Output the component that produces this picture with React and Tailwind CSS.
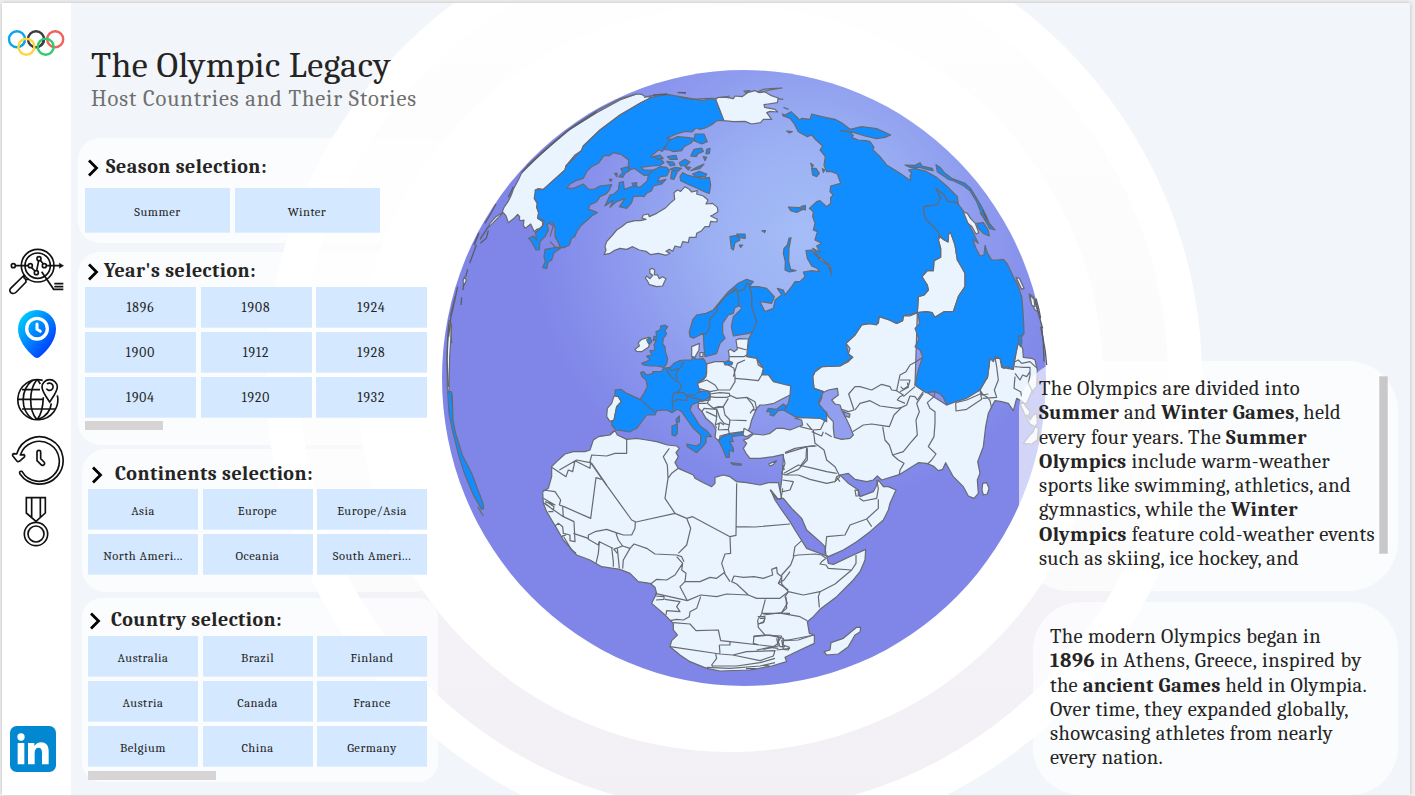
import { useLayoutEffect, useRef } from "react";

/* Text set to an exact measure by spreading the letters. */
function Fit({ w, className = "", children }) {
  const ref = useRef(null);
  useLayoutEffect(() => {
    const el = ref.current;
    el.style.letterSpacing = "0px";
    const natural = el.getBoundingClientRect().width;
    el.style.letterSpacing = (w - natural) / el.textContent.length + "px";
  }, [w]);
  return (
    <div className={className}>
      <span ref={ref} className="whitespace-nowrap">{children}</span>
    </div>
  );
}

function Rings() {
  return (
    <svg className="absolute inset-0" width="1339" height="792" viewBox="71 3 1339 792">
      <defs>
        <linearGradient id="ringFill" x1="0" y1="0" x2="0" y2="1">
          <stop offset="0.08" stopColor="#fefefe" />
          <stop offset="0.5" stopColor="#fbfbfb" />
          <stop offset="0.64" stopColor="#f8f7f9" />
          <stop offset="0.76" stopColor="#f4f2f6" />
          <stop offset="1" stopColor="#f2f0f4" />
        </linearGradient>
      </defs>
      <circle cx="734" cy="378" r="468" fill="#fff" />
      <circle cx="734" cy="378" r="434" fill="url(#ringFill)" />
      <circle cx="730" cy="379" r="373" fill="#fff" />
    </svg>
  );
}

const LAND = "#e9f4ff";
const HOST = "#118dff";
const SEA = "#929fee";

function Part({ x, y, land = [], host = [], sea = [], lines = [], marks = [] }) {
  return (
    <g transform={`translate(${x} ${y}) scale(0.33333)`}>
      {land.map((d, i) => <path key={"l" + i} d={d} fill={LAND} />)}
      {host.map((d, i) => <path key={"h" + i} d={d} fill={HOST} />)}
      {sea.map((d, i) => <path key={"s" + i} d={d} fill={SEA} />)}
      {lines.map((d, i) => <path key={"n" + i} d={d} fill="none" />)}
      {marks.map((d, i) => <path key={"m" + i} d={d} fill="none" stroke="#5a5d68" strokeWidth="4" />)}
    </g>
  );
}

const northAmerica = {
  x: 440, y: 60,
  land: [
    "M245 338 L262 318 300 285 330 258 390 208 470 158 540 120 590 102 605 103 612 108 635 112 600 130 540 165 480 210 430 258 424 272 405 285 378 318 375 330 330 370 310 388 295 386 286 390 288 402 283 415 292 430 290 442 296 458 293 475 308 485 308 497 298 506 290 508 283 515 278 505 272 492 262 500 255 505 250 495 252 480 244 482 238 480 239 470 233 463 222 475 205 488 198 468 190 458 172 475 160 488 145 502 150 490 168 470 186 458 192 442 204 425 214 405 220 388 235 360Z",
    "M492 584 L498 570 495 560 500 545 515 528 530 510 545 500 560 488 585 482 600 482 618 478 606 474 610 465 625 462 628 470 650 460 675 445 690 430 704 418 702 398 712 390 722 394 735 380 748 388 755 396 772 392 770 402 790 408 804 420 798 432 818 430 832 442 834 455 820 464 812 468 832 478 830 486 812 484 808 500 795 500 785 512 770 520 768 532 748 532 745 548 728 545 722 562 705 558 698 574 688 568 678 574 690 580 678 586 655 580 632 584 618 574 598 570 578 560 560 568 540 565 522 572 510 580Z",
    "M616 655 L620 648 630 656 638 646 630 640 629 628 637 625 644 630 643 645 652 644 658 656 668 650 678 656 672 668 668 678 650 680 628 674 622 662Z",
  ],
  host: [
    "M635 112 L680 103 720 110 750 115 790 122 810 116 827 118 852 182 830 182 815 194 796 204 780 208 768 204 755 216 735 214 710 222 680 235 695 238 690 248 672 262 668 274 655 270 640 283 632 290 650 292 665 300 672 308 660 316 635 318 603 322 612 330 655 330 640 345 612 346 582 325 570 330 565 315 566 300 545 284 520 278 508 287 492 287 475 310 455 320 440 335 430 355 408 362 390 372 380 385 400 385 430 372 445 387 462 388 480 378 515 374 508 390 498 402 480 410 470 425 450 435 445 448 458 452 472 458 455 468 445 478 425 495 410 515 404 530 395 535 388 555 372 563 360 560 355 548 345 530 345 500 335 488 322 492 325 512 315 530 300 545 298 570 288 570 275 545 266 535 280 528 290 540 286 518 298 508 310 495 312 482 293 475 296 458 290 442 292 430 283 415 286 390 310 388 330 370 375 330 378 318 424 272 430 258 480 210 540 165 600 130Z",
    "M315 568 L350 562 362 565 342 578 335 600 325 605 320 626 308 622 316 605 312 590Z",
    "M495 438 L510 405 522 402 535 390 538 368 550 365 553 388 580 378 600 382 622 362 625 345 640 330 660 320 680 322 688 332 680 348 660 350 652 365 678 358 665 372 640 378 635 392 620 400 612 410 600 408 580 410 575 428 560 445 538 440 556 415 530 425 510 442 520 420Z",
    "M670 268 L690 240 712 230 740 232 765 236 752 250 732 260 725 272 700 275 688 270Z",
    "M765 222 L792 222 802 245 785 252 762 242Z",
    "M640 290 L660 285 670 295 655 298Z M682 290 L708 286 712 298 690 298Z M680 304 L700 306 705 315 692 318Z",
    "M752 288 L762 268 785 264 790 274 775 280 768 290Z M800 268 L810 265 808 280 798 282Z M790 290 L800 292 795 302Z",
    "M718 308 L735 298 750 306 740 316 722 318Z M770 322 L792 312 780 325 752 332Z",
    "M692 356 L695 334 708 328 712 335 702 358Z",
    "M720 350 L728 338 742 345 760 350 790 355 808 352 812 375 808 400 795 396 770 384 752 376 742 372 722 362Z M758 342 L778 334 800 342 796 350 768 350Z",
    "M536 350 L548 338 543 326 565 320 568 332 555 340 548 352Z M576 370 L590 368 590 378 580 378Z M524 340 L532 340 530 350Z M508 358 L516 358 512 364Z",
    "M690 328 L705 322 725 325 715 333Z M735 320 L752 322 745 330Z",
  ],
  lines: [
    "M260 318 L330 255 400 198 470 152 540 116 590 102",
    "M612 112 L650 104 690 104 M720 112 L760 118 790 116 M712 98 L738 98 M790 116 L830 114 870 108",
    "M325 488 L340 498 330 530 M345 560 L330 545 M370 563 L340 562",
  ],
  marks: ["M245 338 L300 284 380 214 470 155", "M716 97 L738 99", "M640 105 L682 102", "M168 432 L150 465 135 490", "M220 380 L205 412", "M145 500 L120 538", "M115 522 L102 555"],
};

const northAsia = {
  x: 720, y: 60,
  land: [
    "M-13 118 L-5 112 20 112 40 116 45 108 66 110 85 97 105 92 115 96 135 96 152 106 175 114 172 128 145 132 132 134 134 142 165 148 173 156 150 154 140 158 155 178 130 178 122 188 95 192 75 184 40 185 12 182Z",
    "M660 530 L672 540 684 546 686 520 692 518 700 540 705 555 712 600 728 622 735 640 735 680 715 710 700 755 672 755 645 772 636 758 620 755 592 758 595 710 612 705 625 690 622 675 612 662 606 650 622 632 640 632 642 602 662 592 662 565 655 540Z",
    "M888 652 L898 655 912 685 905 688Z M930 705 L942 718 945 740 935 735Z",
  ],
  host: [
    "M187 162 L195 165 213 155 232 172 238 180 246 175 270 178 275 162 305 170 345 178 365 188 390 208 425 200 470 206 512 225 495 232 470 236 435 228 400 217 360 212 385 215 400 226 395 232 415 240 440 242 450 245 462 262 458 268 480 290 500 315 538 338 572 362 570 348 575 340 566 330 585 325 620 335 650 352 680 378 700 398 712 410 715 432 700 425 684 425 672 405 648 385 662 415 650 435 612 440 611 460 620 480 640 492 660 520 655 540 662 565 662 592 642 602 640 632 622 632 606 650 622 675 625 690 612 705 595 710 592 758 570 764 550 767 548 782 530 790 508 780 478 770 470 795 445 790 425 795 405 825 378 850 385 882 398 892 360 918 305 920 285 935 278 950 282 985 310 995 295 1030 320 1060 320 1085 300 1075 240 1073 225 1070 190 1050 205 1030 210 1005 212 978 185 978 160 965 145 945 125 945 130 925 110 895 80 890 85 840 110 785 95 740 95 705 88 680 115 680 140 685 163 710 155 730 120 725 135 755 160 745 165 720 185 705 172 685 190 690 195 705 215 680 225 665 240 665 255 650 250 636 275 632 298 635 292 625 275 618 262 595 258 572 275 570 300 600 325 615 335 645 330 615 295 590 278 565 300 577 290 558 305 550 285 540 292 515 280 510 285 490 278 470 280 455 268 445 290 425 300 422 320 440 332 430 332 412 340 405 330 395 332 378 362 370 352 342 335 335 320 335 312 315 316 290 300 270 308 258 288 240 275 225 262 230 235 215 222 190 210 175 190 168Z",
    "M648 385 L672 405 684 425 700 425 715 432 735 460 745 490 758 515 775 550 758 538 768 565 780 588 792 585 795 556 803 580 815 600 832 600 850 598 862 612 880 650 895 680 905 710 908 740 911 790 912 820 900 838 892 860 883 900 880 928 862 920 850 925 840 895 826 890 820 905 810 895 803 950 780 990 740 1015 710 1024 680 1035 670 1012 660 1002 645 995 618 998 598 985 585 975 595 930 608 890 600 870 585 860 597 838 585 805 600 790 592 758 620 755 636 758 645 772 672 755 700 755 715 710 735 680 735 640 712 600 705 555 692 518 686 520 684 546 660 530 655 515 620 480 611 460 612 440 650 435 662 415Z",
    "M555 315 L585 316 600 308 606 318 636 325 640 332 620 328 600 322 570 322Z",
    "M648 314 L660 322 675 340 695 355 735 370 752 385 770 415 785 440 800 470 808 490 825 510 808 505 795 480 782 455 770 425 750 392 732 378 700 362 685 358 652 335Z",
    "M770 490 L790 488 805 512 808 528 790 520 775 505Z",
    "M213 533 L207 565 206 605 212 628 228 632 208 636 195 630 196 605 190 580 192 565 202 555 207 535Z",
    "M275 325 L288 325 298 340 290 350 278 345Z M272 310 L280 316 276 322Z M307 326 L314 330 310 337Z M200 213 L217 215 208 219Z",
    "M205 441 L240 443 245 450 230 457 212 452Z M243 440 L256 436 256 450 248 448Z",
    "M30 530 L50 526 60 540 45 548 40 570 34 565Z M50 522 L75 522 76 535 58 533Z M58 555 L68 555 62 562Z",
    "M895 828 L903 826 906 845 902 860 896 850Z",
  ],
  lines: ["M72 93 L90 92 78 98Z M112 96 L130 88 150 86 186 84 150 90 120 98Z", "M172 116 L190 118 M190 142 L206 148", "M780 458 L795 480 815 500"],
  marks: ["M125 513 L136 512 132 519", "M948 715 L956 745 962 775", "M788 450 L800 480", "M965 800 L970 850 972 905"],
};

const korea = {
  x: 720, y: 60,
  land: ["M730 456 L742 460 752 476 766 490 776 518 768 522 756 500 744 490Z"],
};

const europe = {
  x: 600, y: 260,
  land: [
    "M320 312 L345 305 372 305 385 315 388 290 385 272 392 268 402 275 412 268 408 240 418 236 445 237 440 290 470 295 475 315 490 325 485 345 505 345 520 365 572 378 570 405 545 418 522 430 495 435 480 435 470 445 455 480 450 500 445 512 458 520 440 530 425 525 428 515 390 520 360 528 358 545 345 532 348 510 338 492 318 475 306 455 295 444 295 425 330 420 330 395 295 385 292 370 312 358 320 340Z",
    "M20 470 L22 445 35 430 42 408 55 410 64 425 50 440 42 480 30 484Z",
    "M105 268 L118 258 115 248 125 238 145 232 155 240 145 262 125 275 110 274Z",
    "M275 290 L275 260 298 250 297 270 288 285 285 292Z M300 278 L310 278 308 290 300 290Z",
    "M506 612 L530 602 520 614 510 618Z",
  ],
  host: [
    "M268 215 L278 180 290 165 318 160 340 150 360 125 385 95 415 70 440 58 460 65 452 75 448 80 455 105 455 140 470 185 460 212 448 220 400 228 394 200 400 170 425 145 420 138 405 142 400 160 385 165 368 190 368 220 375 235 360 250 350 280 335 285 315 290 312 262 310 220 280 235 270 230Z",
    "M180 210 L182 198 195 195 203 200 195 212 200 222 190 235 188 252 195 260 196 275 203 295 200 312 192 322 170 318 150 318 130 315 125 310 150 300 140 288 155 285 150 272 165 270 162 255 170 238 160 242 162 228 170 232 168 215Z",
    "M140 240 L150 232 155 245 146 252Z",
    "M122 338 L130 335 140 345 160 340 158 335 185 335 190 325 210 322 222 310 238 302 255 300 275 300 278 290 290 298 310 296 320 312 318 350 292 370 300 395 325 393 332 410 310 422 295 425 290 428 275 435 270 450 290 482 300 498 320 512 335 530 318 530 318 548 308 560 290 578 262 560 260 552 290 558 302 550 302 525 280 505 262 480 245 455 232 448 216 458 200 450 170 452 165 465 140 465 110 505 88 516 65 512 48 510 35 495 35 484 42 480 50 440 64 425 55 410 45 405 45 390 62 388 80 400 120 418 132 400 142 380 138 360 125 348Z",
    "M228 478 L238 468 238 485 230 490Z M216 498 L232 492 232 520 225 528 216 525Z",
    "M355 540 L375 525 400 522 428 516 430 525 410 528 395 530 400 545 388 545 400 565 400 575 388 570 388 592 378 592 370 570Z",
    "M392 608 L425 612 422 616 398 614Z",
    "M505 445 L530 448 550 432 560 440 552 450 535 452 520 468 510 465 512 455 500 455Z",
    "M372 308 L385 302 398 308 395 315 375 315Z",
  ],
  lines: [
    "M122 418 L145 440 165 455",
    "M200 325 L205 340 225 360 240 370 245 380 235 395 220 400 216 420 220 450 M205 325 L215 332 240 325 252 305 M235 330 L228 345 232 358",
    "M218 425 L235 418 260 422 262 410 250 398 230 398 M262 410 L290 415 310 422 M290 400 L300 395 M255 405 L290 405",
    "M310 220 L318 222 330 200 328 180 350 155 352 140 375 110 395 95 408 85 412 95 432 88 440 70 452 75 M412 95 L416 120 415 138 M388 100 L410 90",
    "M412 262 L440 270 M390 290 L432 290 440 285 M400 350 L412 310 435 300 M385 315 L402 325 405 350 405 365 390 390",
    "M292 370 L320 360 345 375 355 390 330 395 M355 390 L390 390 M405 355 L440 358 475 362 485 345",
    "M330 402 L360 398 388 400 390 408 380 412 345 412 332 410 M388 405 L410 415 440 412 455 430 462 445 450 460 M330 410 L322 430 340 445 370 440 385 415",
    "M440 412 L465 425 470 448 455 452 M370 440 L375 465 390 480 440 482 M340 445 L355 440 372 442 M295 430 L320 430 M306 455 L312 445 350 448 350 470",
    "M318 455 L350 470 348 485 345 495 M350 448 L360 475 372 490 388 495 390 480 M345 495 L362 488 372 495 M355 510 L385 508 388 520 M388 495 L385 508 M355 510 L358 490 M345 495 L350 505",
    "M430 520 L432 505 445 512",
    "M0 530 L30 525 42 512",
  ],
};

const southAsia = {
  x: 800, y: 280,
  land: [
    "M352 98 L330 108 310 107 308 122 290 130 268 120 238 110 235 130 205 132 185 135 165 165 138 190 150 205 145 222 158 232 145 245 120 258 65 260 45 275 38 290 42 325 70 335 85 350 60 410 0 413 -15 415 5 420 8 435 -30 450 -50 445 -70 445 -90 460 -110 465 -140 462 -155 475 -170 480 -160 490 -170 505 -162 520 -150 535 -120 535 -80 530 -50 523 -50 540 -55 600 -60 640 -66 655 -50 655 -25 685 5 715 20 750 60 785 75 800 78 825 85 830 130 810 170 785 210 755 250 720 265 690 270 670 288 630 265 620 250 620 235 600 228 620 220 635 180 650 175 630 145 610 125 590 120 585 145 580 165 598 200 605 220 600 232 588 245 600 300 583 355 548 380 550 400 558 415 572 428 568 437 548 460 590 490 620 505 648 522 655 535 640 532 600 540 580 533 545 550 500 557 440 565 400 575 380 585 362 605 365 625 370 640 392 646 370 650 355 668 365 678 380 690 395 685 410 680 405 690 420 700 405 710 400 712 430 705 440 715 445 712 480 695 492 670 490 690 465 700 455 705 440 690 432 675 405 660 370 680 370 695 335 710 320 712 270 705 240 695 235 670 232 668 205 655 185 648 220 640 268 605 262 600 235 570 235 563 290 540 330 440 375 345 315Z",
    "M548 610 L560 608 567 625 562 642 550 645 546 630Z",
    "M165 630 L175 632 175 648 168 648Z",
    "M688 42 L700 50 714 95 705 90 690 60Z M650 0 L660 0 670 25 664 26Z",
  ],
  sea: [
    "M85 330 L112 325 115 345 95 360 105 372 120 375 125 390 138 415 150 440 160 465 150 475 125 478 103 472 100 445 100 425 85 410 78 395 62 385 55 375 65 355 65 340Z",
    "M130 395 L150 402 148 412 135 408Z",
  ],
  lines: [
    "M125 388 L145 395 162 390 146 342 165 320 180 320 215 330 245 313 270 320 275 330 290 332 300 285 318 275 330 255 348 245 368 232",
    "M165 390 L180 370 210 362 240 378 292 385 305 382 M158 455 L190 435 215 432 248 437 268 440 282 405 305 382 320 375 330 348 345 350",
    "M290 332 L310 345 300 350 292 360 315 370 M300 300 L330 300 325 318 310 328 302 320 M310 350 L345 320 M300 335 L325 322 322 308",
    "M248 440 L255 480 268 495 278 525 310 515 330 490 352 465 348 420 358 395 350 370 370 340",
    "M278 525 L295 540 312 550 300 570 298 583 M405 335 L402 350 382 368 390 385 405 395 405 430 402 470 385 500 408 522 395 540 383 552 M345 350 L352 360 370 335",
    "M467 368 L500 360 540 342 M467 368 L468 393 500 388 545 358 540 330 550 345 560 350 570 362 575 385 M540 330 L545 345 565 342 M540 330 L545 300 563 295 M548 355 L590 352 583 330 595 300 590 260 585 232",
    "M645 245 L655 240 665 250 690 245 708 262 M645 260 L670 262 690 262 690 285 M645 280 L660 300 668 285 680 290 690 275 M645 290 L642 325 662 335 665 350 M690 285 L685 310 700 340",
    "M40 450 L45 490 72 510 80 540 105 560 120 590 M45 497 L20 500 -15 505 -45 518 M20 500 L18 535 0 560 M-48 580 L-5 555 40 565 80 575 110 580",
    "M0 440 L40 450 62 448 75 420 M20 430 L35 448 M35 455 L65 468 70 455 M75 458 L95 470",
    "M120 590 L105 605 80 610 30 598 -5 585",
  ],
  marks: ["M705 58 L715 100 728 145", "M722 140 L730 180 736 215 740 255"],
};

const africa = {
  x: 530, y: 420,
  land: [
    "M255 32 L262 45 290 58 320 55 350 60 380 65 412 75 440 78 448 85 438 98 445 110 435 128 445 145 490 165 495 175 520 188 545 200 555 190 555 172 580 165 600 170 620 185 650 188 690 195 715 188 745 188 755 235 745 238 722 210 735 240 755 270 780 305 795 330 830 385 890 408 895 430 910 433 970 405 1007 388 1005 420 990 455 970 480 920 530 870 568 850 590 832 605 838 640 853 645 853 670 810 690 765 712 770 725 725 738 660 750 570 753 530 745 480 725 450 705 420 680 425 662 442 645 430 630 430 610 400 580 365 550 380 520 375 502 360 490 325 485 300 460 270 448 215 440 180 420 140 405 122 385 100 360 80 325 65 300 50 275 40 250 38 215 55 205 65 170 65 140 80 125 105 102 130 95 165 95 180 90 190 60 205 50 240 45Z",
    "M980 622 L992 622 990 636 975 645 955 680 925 702 890 705 882 695 900 690 903 668 940 655Z",
  ],
  lines: [
    "M290 58 L290 100 255 100 230 108 185 105 180 125 215 175 305 300 318 306 435 280 470 295",
    "M65 142 L108 170 115 150 128 155 135 122 180 145 182 125 M88 150 L140 120 180 128 M185 130 L230 195",
    "M215 178 L198 173 182 295 102 260 88 255 92 240 75 215 40 210",
    "M40 235 L75 255 60 250 45 245 M45 250 L70 270 72 260 55 248 M55 275 L70 275 M40 248 L100 290 98 260 M100 290 L132 305 135 365 120 362 120 345 100 340 98 320 85 310 75 318 M98 345 L125 390 138 400 M108 345 L95 350 M130 340 L175 355",
    "M316 306 L315 325 305 345 280 345 258 338 230 328 195 335 175 345 175 358 205 375 208 365 248 385 M258 340 L265 360 278 378 250 388",
    "M208 365 L205 400 198 430 M245 382 L250 425 250 440 M262 385 L268 445 M252 388 L262 400 M278 378 L300 385 280 420 278 446",
    "M300 385 L312 372 350 385 375 402 440 405 455 410 462 425 M470 295 L482 325 470 375 445 400",
    "M418 85 L400 110 412 135 414 175 405 235 435 280 M414 175 L425 160 445 145",
    "M470 295 L488 290 600 350 602 400 585 402 575 430 585 460 M488 290 L600 350 618 346 620 190 M620 320 L675 321 780 312",
    "M440 410 L458 430 435 465 410 480 380 478 362 492 M458 430 L455 450 468 460 465 485 510 485 540 472 560 475 582 458 600 485",
    "M465 485 L450 500 472 542 512 525 560 530 590 522 655 525 620 492 605 485 612 468 640 472 672 470 700 475 728 465 725 448 740 442 742 460 755 470 745 490 775 510",
    "M375 520 L472 542 M375 528 L402 530 402 538 378 540 M405 538 L450 545 440 560 450 575 410 572 408 585 M420 602 L440 598 460 600 478 590 480 575 500 565 512 530",
    "M430 608 L480 612 498 632 565 630 572 662 600 665 688 675 670 670 672 648 705 645",
    "M655 525 L680 535 750 535 775 515 M706 538 L695 580 780 580 M695 582 L683 600 685 622 705 645 755 648 M768 530 L770 565 755 578 M683 590 L705 590 702 605 685 612",
    "M420 680 L570 702 608 705 M568 675 L600 675 600 665 M568 675 L570 700 M557 702 L560 715 545 735 550 740 M545 738 L620 738 690 728 735 715 M608 705 L690 722 730 708 735 692 650 695 608 705 M680 690 L720 682 745 685 M780 685 L740 690 M530 742 L600 745 690 738 735 728",
    "M755 648 L745 665 750 680 765 680 M755 660 L775 660 853 645 M705 645 L745 650 745 670 730 680 690 675",
    "M780 455 L762 480 745 490",
  ],
  marks: ["M648 746 L678 746", "M700 737 L718 738"],
};

const eastAfrica = {
  x: 720, y: 420,
  lines: [
    "M150 210 L172 238 183 235 188 205 M190 110 L195 130 185 160 195 165 235 148 262 120 262 85 M195 100 L262 80 290 78 M195 165 L235 165 M188 180 L220 185 210 210 188 215 M188 135 L193 150",
    "M345 185 L350 170 362 165 M350 172 L360 185",
    "M470 180 L475 205 470 235 430 243 418 235 M475 238 L475 265 440 297 390 315 375 345 320 350 315 400 M440 297 L455 320",
    "M245 362 L225 380 220 408 235 405 285 402 305 405 318 415 305 425 300 432 318 435 325 445 395 450 M222 408 L212 435 185 465 185 492 205 515 250 525 300 515 345 492 395 450 408 430 408 405",
    "M300 515 L295 530 298 562 M205 515 L195 530 202 550 185 578 130 585 M185 580 L240 590 262 602",
    "M192 662 L235 660 280 645 M100 650 L150 645 168 650 190 655 190 675 208 682 205 690 190 688 185 660 M170 655 L175 678 130 688 M120 595 L135 595 130 608 115 612",
  ],
};

const westRim = {
  x: 435, y: 210,
  land: ["M42 330 L50 345 46 410 44 440 42 540 37 540 36 440 38 380Z", "M88 200 L94 210 88 225 84 215Z"],
  host: ["M38 545 L48 545 52 560 54 630 62 670 82 735 110 790 144 880 146 896 140 898 115 855 88 790 72 740 52 660 42 610Z"],
  lines: ["M50 545 L52 590 M128 890 L145 918", "M45 320 L60 260 M47 340 L50 400"],
  marks: ["M68 230 L56 285 47 325 41 380", "M42 340 L38 400 36 450 40 530", "M132 68 L118 105", "M124 105 L104 160", "M98 178 L92 200 M86 222 L84 240", "M80 262 L78 285", "M160 62 L154 84 136 100"],
};

function Globe() {
  return (
    <svg className="block h-[620px] w-[608px]" viewBox="440 68 608 620">
      <defs>
        <radialGradient id="ocean" gradientUnits="userSpaceOnUse" cx="805" cy="235" r="275">
          <stop offset="0" stopColor="#a5bdf7" />
          <stop offset="0.35" stopColor="#9bb0f3" />
          <stop offset="0.7" stopColor="#8c97ed" />
          <stop offset="1" stopColor="#7f86e8" />
        </radialGradient>
      </defs>
      <ellipse cx="744" cy="378" rx="302" ry="308" fill="url(#ocean)" />
      <g stroke="#676a72" strokeWidth="3.6" strokeLinejoin="round">
        <Part {...northAmerica} />
        <Part {...southAsia} />
        <Part {...northAsia} />
        <Part {...korea} />
        <Part {...europe} />
        <Part {...africa} />
        <Part {...eastAfrica} />
        <Part {...westRim} />
      </g>
    </svg>
  );
}

function Chevron({ className }) {
  return (
    <svg className={className} width="12" height="18" viewBox="0 0 12 18" fill="none" stroke="#000" strokeWidth="2.8">
      <path d="M1 1.5 L8.5 9 L1 16.5" />
    </svg>
  );
}

function Heading({ gap, w, children }) {
  return (
    <div className="flex h-[27px] items-center">
      <Chevron className="mt-[2px] shrink-0" />
      <Fit w={w} className={"text-[20px] leading-[27px] font-bold " + gap}>{children}</Fit>
    </div>
  );
}

function Tiles({ items, cols, height, size = "text-[12.5px] tracking-[0.5px] pt-[4px]" }) {
  return (
    <div className={"grid gap-x-[4.5px] gap-y-1 " + cols}>
      {items.map((t) => (
        <div key={t} className={"flex items-center justify-center border-b border-[#e0efff] bg-[#d4e9ff] " + height + " " + size}>
          {t}
        </div>
      ))}
    </div>
  );
}

function Sidebar() {
  return (
    <aside className="flex w-[69px] shrink-0 flex-col items-start bg-white">
      <svg className="mt-[27px] ml-[5px]" width="60" height="27" viewBox="7 30 60 27" fill="none" strokeWidth="2.4">
        <circle cx="17" cy="39.3" r="8" stroke="#0ba5ee" />
        <circle cx="36" cy="39.3" r="8" stroke="#3d3d41" />
        <circle cx="55.2" cy="39.3" r="8" stroke="#f0625b" />
        <circle cx="26.4" cy="46.8" r="8" stroke="#fdd53c" />
        <circle cx="45.7" cy="46.8" r="8" stroke="#2fcc70" />
        <path d="M24.7 41.5 A8 8 0 0 1 21.8 45.6" stroke="#0ba5ee" />
        <path d="M43.9 40.3 A8 8 0 0 1 40.6 45.6" stroke="#3d3d41" />
      </svg>
      <svg className="mt-[191px] ml-[6px]" width="57" height="47" viewBox="24 24 171 141" fill="none" stroke="#111" strokeWidth="5">
        <circle cx="113" cy="77" r="49" />
        <circle cx="113" cy="77" r="38" />
        <circle cx="40" cy="77" r="6" />
        <circle cx="91" cy="77" r="6" />
        <circle cx="117" cy="56" r="6" />
        <circle cx="109" cy="98" r="6" />
        <circle cx="133" cy="77" r="6" />
        <path d="M46 77 H85 M94 82 L105 93 M110 92 L116 62 M121 61 L130 72 M139 77 H180 M125 95 L161 148 H190 M163 140 H190 M163 131 H190" />
        <path d="M178 69 L191 77 L178 85Z" fill="#111" strokeWidth="1" />
        <path d="M73 105 L32 145 Q26 153 34 159 Q42 163 49 156 L78 126 L77 118 L86 118 M73 105 L72 113 L77 118" />
      </svg>
      <svg className="mt-[14px] ml-[15px]" width="40" height="50" viewBox="51 207 120 150" fill="none">
        <defs>
          <linearGradient id="pin" x1="0.1" y1="0.1" x2="0.8" y2="0.8">
            <stop offset="0" stopColor="#00ccff" />
            <stop offset="0.5" stopColor="#0088ff" />
            <stop offset="1" stopColor="#0044ff" />
          </linearGradient>
        </defs>
        <path d="M111 210 C79 210 54 235 54 266 C54 300 78 330 103 351 Q111 357 119 351 C144 330 168 300 168 266 C168 235 143 210 111 210Z" fill="url(#pin)" />
        <circle cx="111" cy="266" r="31" stroke="#fff" strokeWidth="10" />
        <path d="M111 252 V268 L121 274" stroke="#fff" strokeWidth="9" strokeLinecap="round" strokeLinejoin="round" />
      </svg>
      <svg className="mt-[19px] ml-[14px]" width="43" height="43" viewBox="48 414 129 129" fill="none" stroke="#111" strokeWidth="5">
        <path d="M128 421 A60 60 0 1 0 172 466" />
        <path d="M98 420 C60 450 60 510 98 538 M110 420 C86 450 86 510 110 538 M112 418 L121 432 M112 538 C124 524 129 500 130 472 M116 538 C140 528 152 508 154 490 M66 449 H120 M52 478 H130 M66 507 H166" />
        <path d="M149 486 C137 468 126 454 126 441 A23 22 0 0 1 172 441 C172 454 161 468 149 486Z" />
        <path d="M141 432 A11 11 0 1 1 139 446" />
      </svg>
      <svg className="mt-[14px] ml-[9px]" width="53" height="50" viewBox="33 585 159 150" fill="none" stroke="#111" strokeWidth="5" strokeLinejoin="round">
        <path d="M50 642 A71 71 0 1 1 60 702 Q56 692 66 694 A60 60 0 1 0 61 645 L72 644 Q76 648 72 652 L58 664 Q53 667 50 662 L38 647 Q37 641 42 641Z" />
        <path d="M111 637 Q111 631 117 631 Q122 631 122 637 V656 L132 666 Q136 671 131 675 Q127 678 123 674 L111 662Z" />
      </svg>
      <svg className="mt-[11px] ml-[20px]" width="27" height="51" viewBox="66 768 81 153" fill="none" stroke="#111" strokeWidth="5">
        <path d="M79 773 H136 V819 L108 844 L79 819Z M95 773 V832 M121 773 V832" />
        <circle cx="108" cy="882" r="35" />
        <circle cx="108" cy="882" r="24" />
      </svg>
      <svg className="mt-[179px] ml-[8px]" width="46" height="46" viewBox="0 0 138 138">
        <rect width="138" height="138" rx="20" fill="#0288d1" />
        <circle cx="33" cy="33" r="11" fill="#fff" />
        <path d="M23 51 H43 V115 H23Z M54 51 H73 V60 C79 52 86 49 94 49 C109 49 116 60 116 76 V115 H96 V80 C96 70 92 65 86 65 C78 65 74 71 74 80 V115 H54Z" fill="#fff" />
      </svg>
    </aside>
  );
}

const B = ({ children }) => <b className="font-bold">{children}</b>;

export default function App() {
  return (
    <div className="h-[796px] w-[1415px] overflow-hidden bg-[#f0f0f0] pt-[3px] pl-[2px] font-['Cambria','Caladea','Noto_Serif','DejaVu_Serif_Condensed','DejaVu_Serif',serif] text-[#252423] [font-stretch:condensed]">
      <div className="flex h-[792px] w-[1408px] overflow-hidden shadow-[0_0_4px_#bbb]">
        <Sidebar />
        <main className="relative flex w-[1339px] shrink-0 bg-[#f2f6fb]">
          <Rings />
          <section className="relative flex w-[369px] shrink-0 flex-col pl-[7px]">
            <header className="mt-[41px] pl-[13px]">
              <Fit w={300} className="text-[36px] leading-[44px]">The Olympic Legacy</Fit>
              <Fit w={326} className="-mt-[2px] mb-[2px] text-[22.5px] leading-[26px] text-[#706f6e]">Host Countries and Their Stories</Fit>
            </header>
            <div className="mt-[24px] h-[105px] w-[369px] rounded-[22px] bg-white/65 pt-[15px] pl-[7px]">
              <div className="pl-[3px]"><Heading gap="ml-[6px]" w={161}>Season selection:</Heading></div>
              <div className="mt-[8px]"><Tiles items={["Summer", "Winter"]} cols="grid-cols-[145px_145px]" height="h-[45px]" /></div>
            </div>
            <div className="mt-[9px] h-[193px] w-[369px] rounded-[22px] bg-white/65 pt-[5px] pl-[7px]">
              <div className="pl-[3px]"><Heading gap="ml-[4px]" w={152}>Year's selection:</Heading></div>
              <div className="mt-[3px]">
                <Tiles items={["1896", "1908", "1924", "1900", "1912", "1928", "1904", "1920", "1932"]} cols="grid-cols-[111px_111px_111px]" height="h-[41px]" size="text-[13.5px] tracking-[1px] pt-[3px]" />
              </div>
              <div className="mt-[3px] h-[9px] w-[78px] bg-[#d6d4d5]" />
            </div>
            <div className="mt-[4px] ml-[4px] h-[143px] w-[356px] rounded-[24px] bg-white/65 pt-[11px] pl-[6px]">
              <div className="pl-[4px]"><Heading gap="ml-[11px]" w={198}>Continents selection:</Heading></div>
              <div className="mt-[2px]">
                <Tiles items={["Asia", "Europe", "Europe/Asia", "North Ameri...", "Oceania", "South Ameri..."]} cols="grid-cols-[110px_110px_110px]" height="h-[41px]" />
              </div>
            </div>
            <div className="mt-[6px] ml-[4px] h-[184px] w-[356px] rounded-[20px] bg-white/65 pt-[8px] pl-[6px]">
              <div className="pl-[2px]"><Heading gap="ml-[9px]" w={171}>Country selection:</Heading></div>
              <div className="mt-[3px]">
                <Tiles items={["Australia", "Brazil", "Finland", "Austria", "Canada", "France", "Belgium", "China", "Germany"]} cols="grid-cols-[110px_110px_110px]" height="h-[41px]" />
              </div>
              <div className="mt-[4px] h-[9px] w-[128px] bg-[#d6d4d5]" />
            </div>
          </section>
          <section className="relative mt-[65px] w-[608px] shrink-0">
            <Globe />
          </section>
          <section className="relative -ml-[29px] flex w-[379px] shrink-0 flex-col">
            <div className="mt-[358px] flex h-[230px] rounded-[50px] bg-white/65 pt-[15px] pl-[20px]">
              <div className="w-[340px] pt-[1px] text-[20.5px] leading-[24.3px]">
                <Fit w={261}>The Olympics are divided into</Fit>
                <Fit w={302}><B>Summer</B> and <B>Winter Games</B>, held</Fit>
                <Fit w={268}>every four years. The <B>Summer</B></Fit>
                <Fit w={291}><B>Olympics</B> include warm-weather</Fit>
                <Fit w={312}>sports like swimming, athletics, and</Fit>
                <Fit w={259}>gymnastics, while the <B>Winter</B></Fit>
                <Fit w={336}><B>Olympics</B> feature cold-weather events</Fit>
                <Fit w={260}>such as skiing, ice hockey, and</Fit>
              </div>
              <div className="h-[178px] w-[9px] border border-[#d8d8d8] bg-[#c8c8c8]" />
            </div>
            <div className="mt-[11px] ml-[14px] h-[193px] rounded-[48px] bg-white/65 pt-[23px] pl-[17px] text-[20.5px] leading-[24.3px]">
              <Fit w={271}>The modern Olympics began in</Fit>
              <Fit w={312}><B>1896</B> in Athens, Greece, inspired by</Fit>
              <Fit w={317}>the <B>ancient Games</B> held in Olympia.</Fit>
              <Fit w={299}>Over time, they expanded globally,</Fit>
              <Fit w={283}>showcasing athletes from nearly</Fit>
              <Fit w={113}>every nation.</Fit>
            </div>
          </section>
        </main>
      </div>
    </div>
  );
}
